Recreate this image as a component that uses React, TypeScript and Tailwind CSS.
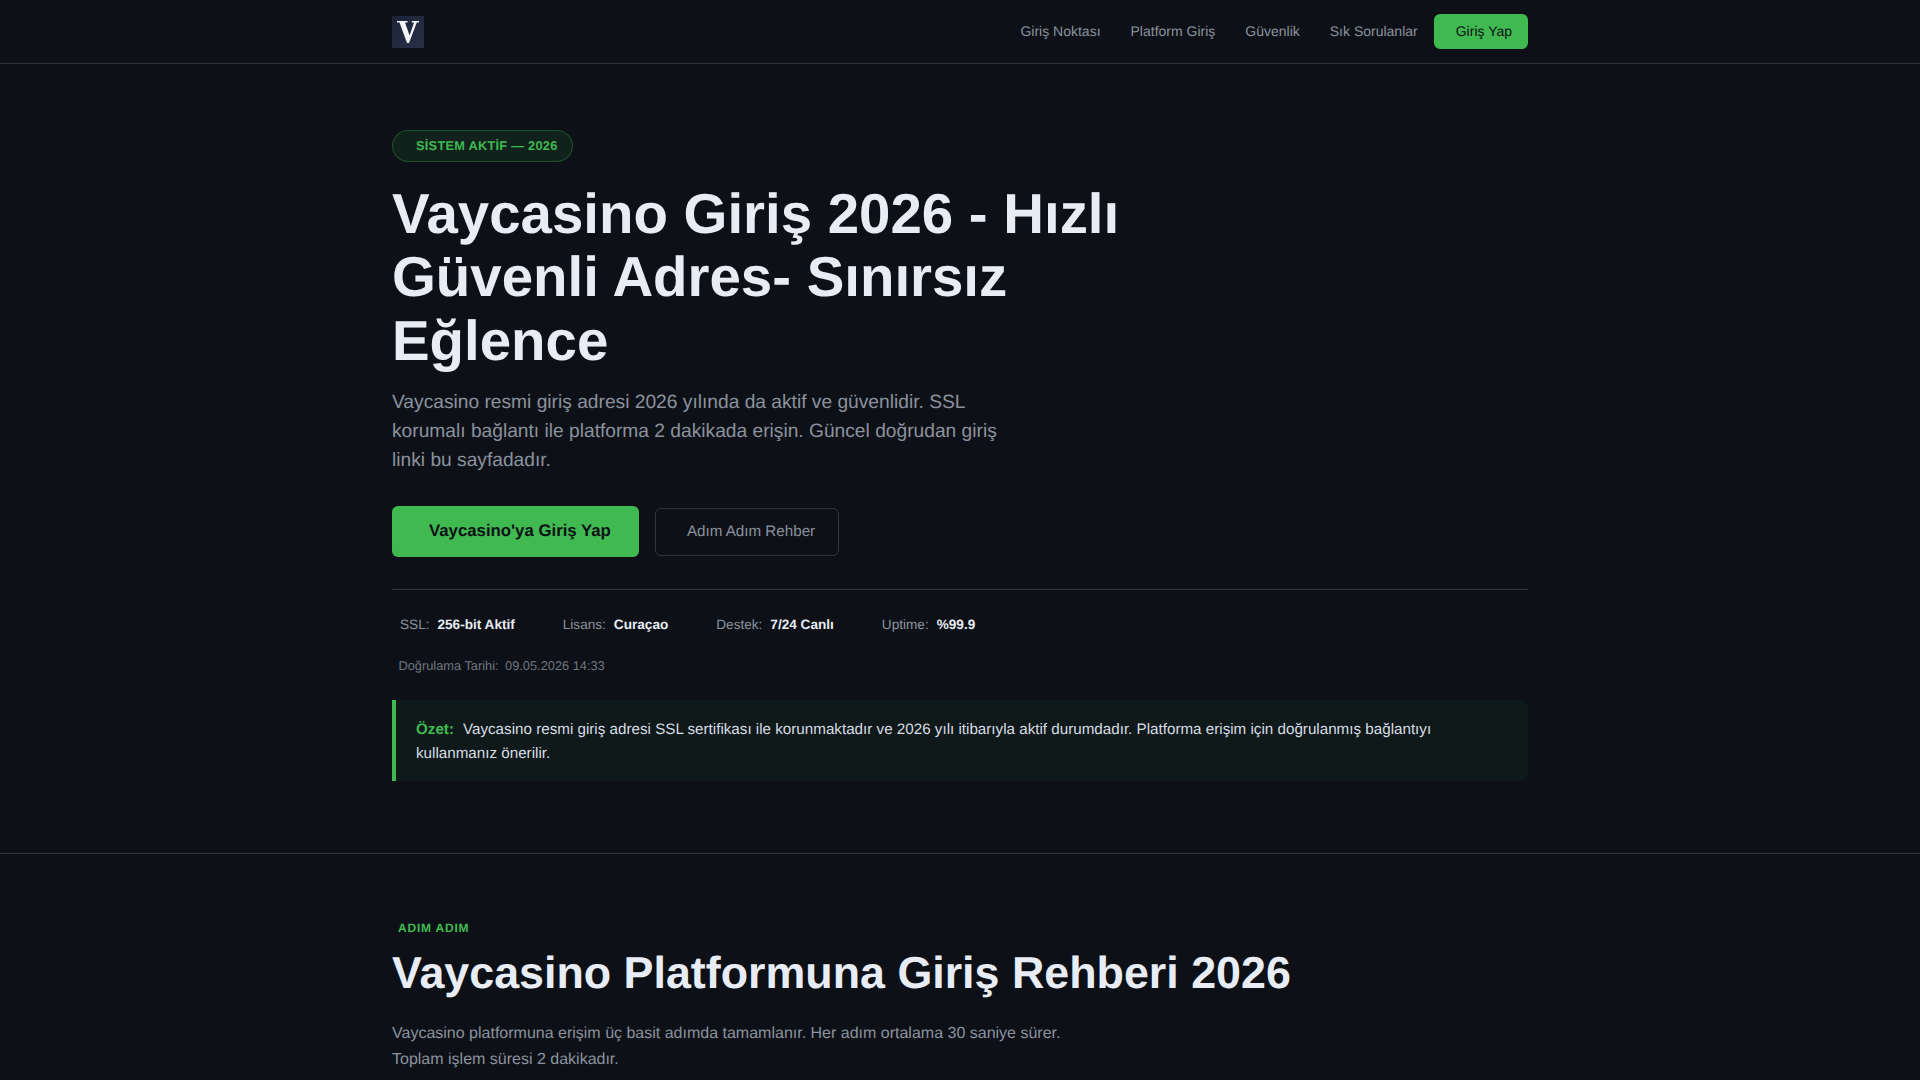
import React from "react";

const font = { fontFamily: '"Liberation Sans", Arial, sans-serif' };

function Stat({ label, value }: { label: string; value: string }) {
  return (
    <div className="flex items-center gap-2 px-2 text-[13.6px] leading-5">
      <span className="text-[#8b919e]">{label}</span>
      <strong className="font-bold text-[#e8edf5]">{value}</strong>
    </div>
  );
}

export default function App() {
  return (
    <div className="h-screen overflow-hidden bg-[#0d1117] text-[#e8edf5] [text-rendering:geometricPrecision]" style={font}>
      <nav className="h-[64px] border-b border-[#30363d]">
        <div className="mx-auto flex h-[63px] w-[1136px] items-center justify-between">
          <svg viewBox="0 0 32 32" className="h-8 w-8" role="img" aria-label="V">
            <defs>
              <linearGradient id="logoBg" x1="0" y1="0" x2="1" y2="1">
                <stop offset="0" stopColor="#1a2338" />
                <stop offset="1" stopColor="#2a3047" />
              </linearGradient>
            </defs>
            <rect width="32" height="32" fill="url(#logoBg)" />
            <path d="M5 5H15.5V6.5H13L17.6 19.5L22 6.5H19.8V5H27V6.5H24.8L17 27H15L7.5 6.5H5Z" fill="#f2f4f8" />
          </svg>
          <div className="flex items-center gap-[6px] text-sm text-[#8b919e]">
            <a className="px-3 pb-[2px]">Giriş Noktası</a>
            <a className="px-3 pb-[2px]">Platform Giriş</a>
            <a className="px-3 pb-[2px]">Güvenlik</a>
            <a className="pb-[2px] pl-3 pr-[10px]">Sık Sorulanlar</a>
            <a className="flex h-[35px] items-center rounded-md bg-[#3fb950] pb-[1px] pl-[22px] pr-4 text-[#0d1117]">Giriş Yap</a>
          </div>
        </div>
      </nav>

      <section className="border-b border-[#30363d] pb-[72px] pt-[66px]">
        <div className="mx-auto w-[1136px]">
          <div className="inline-flex h-8 items-center rounded-full border border-[#238636]/50 bg-[#3fb950]/10 pl-[23px] pr-[14px] text-[12.8px] font-bold tracking-[0.25px] text-[#3fb950]">
            SİSTEM AKTİF — 2026
          </div>
          <h1 className="mt-[20px] max-w-[800px] text-[56.4px] font-bold leading-[63.36px]">
            Vaycasino Giriş 2026 - Hızlı Güvenli Adres- Sınırsız Eğlence
          </h1>
          <p className="mt-[17px] max-w-[620px] text-[19.2px] leading-[28.8px] text-[#8b919e]">
            Vaycasino resmi giriş adresi 2026 yılında da aktif ve güvenlidir. SSL korumalı bağlantı ile platforma 2 dakikada erişin. Güncel doğrudan giriş linki bu sayfadadır.
          </p>
          <div className="mt-[31px] flex items-center gap-4">
            <a className="flex h-[51px] items-center rounded-md bg-[#3fb950] pb-[2px] pl-[37px] pr-[28px] text-[16.8px] font-bold text-[#0d1117]">
              Vaycasino'ya Giriş Yap
            </a>
            <a className="flex h-[48px] items-center rounded-md border border-[#30363d] pl-[31px] pr-[23px] text-[15.2px] text-[#8b919e]">
              Adım Adım Rehber
            </a>
          </div>
          <div className="mt-8 border-t border-[#30363d] pt-[25px]">
            <div className="flex gap-8">
              <Stat label="SSL:" value="256-bit Aktif" />
              <Stat label="Lisans:" value="Curaçao" />
              <Stat label="Destek:" value="7/24 Canlı" />
              <Stat label="Uptime:" value="%99.9" />
            </div>
            <div className="mt-[21px] flex gap-[6.5px] px-[6.5px] text-[12.8px] leading-5 text-[#6e7681]">
              <span>Doğrulama Tarihi:</span>
              <span>09.05.2026 14:33</span>
            </div>
          </div>
          <div className="mt-[24px] rounded-r-lg border-l-4 border-[#3fb950] bg-[#3fb950]/5 pb-[15px] pl-[20px] pr-[20px] pt-[17.6px] text-[15.2px] leading-[24px] text-[#d8dde5]">
            <strong className="mr-[9px] font-bold text-[#3fb950]">Özet:</strong>
            Vaycasino resmi giriş adresi SSL sertifikası ile korunmaktadır ve 2026 yılı itibarıyla aktif durumdadır. Platforma erişim için doğrulanmış bağlantıyı kullanmanız önerilir.
          </div>
        </div>
      </section>

      <section className="pt-[64px]">
        <div className="mx-auto w-[1136px]">
          <div className="px-[6px] text-xs font-bold tracking-[0.8px] leading-5 text-[#3fb950]">ADIM ADIM</div>
          <h2 className="mt-[9px] text-[44.8px] font-bold leading-[52px]">Vaycasino Platformuna Giriş Rehberi 2026</h2>
          <p className="mt-[22px] max-w-[700px] text-base leading-[25.6px] text-[#8b919e]">
            Vaycasino platformuna erişim üç basit adımda tamamlanır. Her adım ortalama 30 saniye sürer. Toplam işlem süresi 2 dakikadır.
          </p>
        </div>
      </section>
    </div>
  );
}
